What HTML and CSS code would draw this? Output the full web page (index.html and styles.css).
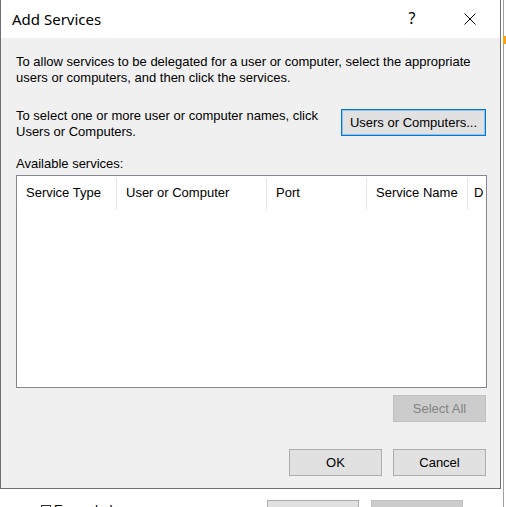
FILE: index.html
```html
<!DOCTYPE html>
<html>
<head>
<meta charset="utf-8">
<link rel="stylesheet" href="styles.css">
</head>
<body>
<div class="desktop">
  <div class="backwin">
    <div class="back-mark"></div>
    <div class="back-row">
      <span class="back-check"><span class="box"></span>Expanded</span>
      <span class="back-btn"></span>
      <span class="back-btn disabled"></span>
    </div>
  </div>
  <div class="dialog">
    <div class="titlebar">
      <span class="title">Add Services</span>
      <span class="tb-help">?</span>
      <span class="tb-close">
        <svg width="12" height="12" viewBox="0 0 12 12"><path d="M0.5 0.5 L11.5 11.5 M11.5 0.5 L0.5 11.5" stroke="#000" stroke-width="1"/></svg>
      </span>
    </div>
    <div class="content">
      <p class="intro">To allow services to be delegated for a user or computer, select the appropriate users or computers, and then click the services.</p>
      <div class="select-row">
        <p class="select-text">To select one or more user or computer names, click Users or Computers.</p>
        <button class="btn default users-btn">Users or Computers...</button>
      </div>
      <div class="label">Available services:</div>
      <div class="listbox">
        <div class="header">
          <div class="col c1">Service Type</div>
          <div class="col c2">User or Computer</div>
          <div class="col c3">Port</div>
          <div class="col c4">Service Name</div>
          <div class="col c5">D</div>
        </div>
      </div>
      <div class="selall-row">
        <button class="btn disabled">Select All</button>
      </div>
      <div class="footer">
        <button class="btn">OK</button>
        <button class="btn">Cancel</button>
      </div>
    </div>
  </div>
</div>
</body>
</html>
```
FILE: styles.css
```css
* { box-sizing: border-box; }
html, body { margin: 0; padding: 0; }
body {
  width: 506px;
  height: 507px;
  overflow: hidden;
  background: #ffffff;
  font-family: "Liberation Sans", Arial, sans-serif;
  font-size: 13px;
  color: #000;
}
.desktop {
  position: relative;
  width: 506px;
  height: 507px;
}
.backwin {
  position: absolute;
  left: 0;
  top: 0;
  width: 504px;
  height: 507px;
  border-right: 1px solid #a0a0a0;
}
.back-mark {
  position: absolute;
  left: 503px;
  top: 36px;
  width: 3px;
  height: 8px;
  background: #f7a21b;
}
.back-row {
  position: absolute;
  left: 0;
  top: 500px;
  width: 504px;
  display: flex;
  align-items: flex-start;
}
.back-check {
  margin-left: 41px;
  display: flex;
  align-items: flex-start;
  gap: 3px;
  font-size: 13px;
  line-height: 13px;
  margin-top: 3px;
  width: 226px;
}
.back-check .box {
  width: 10px;
  height: 10px;
  border: 1px solid #333;
  margin-top: 2px;
}
.back-btn {
  width: 92px;
  height: 26px;
  background: #e1e1e1;
  border: 1px solid #adadad;
  margin-right: 12px;
}
.back-btn.disabled {
  background: #cccccc;
  border-color: #bfbfbf;
}
.dialog {
  position: absolute;
  left: 0;
  top: 0;
  width: 501px;
  height: 489px;
  border: 1px solid #707070;
  border-top: none;
  background: #f0f0f0;
  display: flex;
  flex-direction: column;
}
.titlebar {
  height: 38px;
  background: #ffffff;
  display: flex;
  align-items: center;
  position: relative;
}
.title {
  font-family: "Noto Sans", "Open Sans", sans-serif;
  font-size: 15px;
  margin-left: 11px;
  margin-top: -1px;
  flex: 1;
}
.tb-help {
  font-family: "Noto Sans", sans-serif;
  font-size: 16px;
  width: 46px;
  text-align: center;
  margin-right: 12px;
  margin-top: -2px;
}
.tb-close {
  width: 46px;
  display: flex;
  justify-content: center;
  margin-right: 7px;
  margin-top: -1px;
}
.content {
  flex: 1;
  padding: 16px 14px 0 15px;
  display: flex;
  flex-direction: column;
}
p { margin: 0; }
.intro {
  line-height: 16px;
  width: 470px;
}
.select-row {
  display: flex;
  align-items: flex-start;
  justify-content: space-between;
  margin-top: 22px;
}
.select-text {
  width: 320px;
  line-height: 16px;
  margin-top: 0;
}
.btn {
  -webkit-appearance: none;
  appearance: none;
  font-family: "Liberation Sans", Arial, sans-serif;
  font-size: 13px;
  color: #000;
  background: #e1e1e1;
  border: 1px solid #adadad;
  border-radius: 0;
  height: 27px;
  width: 93px;
  padding: 0;
  margin: 0;
}
.btn.default {
  border: 1px solid #0078d7;
  box-shadow: inset 0 0 0 1px #8ec2ee;
}
.users-btn {
  width: 145px;
  margin-top: 1px;
}
.btn.disabled {
  background: #cccccc;
  border-color: #bfbfbf;
  color: #838383;
}
.label {
  margin-top: 16px;
  line-height: 15px;
}
.listbox {
  margin-top: 4px;
  width: 471px;
  height: 213px;
  background: #fff;
  border: 1px solid #828790;
  overflow: hidden;
}
.header {
  display: flex;
  height: 31px;
  margin-top: 2px;
}
.col {
  border-right: 1px solid #e5e5e5;
  padding-left: 9px;
  line-height: 29px;
  white-space: nowrap;
  overflow: hidden;
  flex: none;
}
.c1 { width: 100px; }
.c2 { width: 150px; }
.c3 { width: 100px; }
.c4 { width: 101px; }
.c5 { width: 30px; padding-left: 6px; border-right: none; }
.selall-row {
  display: flex;
  justify-content: flex-end;
  margin-top: 7px;
}
.footer {
  display: flex;
  justify-content: flex-end;
  gap: 11px;
  margin-top: 27px;
}
```
